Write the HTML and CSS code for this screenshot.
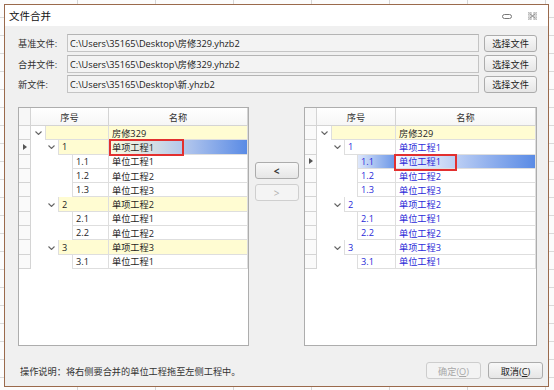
FILE: index.html
```html
<!DOCTYPE html>
<html lang="zh-CN">
<head>
<meta charset="utf-8">
<title>文件合并</title>
<link rel="stylesheet" href="styles.css">
</head>
<body>
<div class="dialog">
  <div class="titlebar">
    <span class="title">文件合并</span>
    <svg class="wmin" width="10" height="5" viewBox="0 0 10 5"><rect x="0.5" y="0.5" width="9" height="4" rx="2" fill="none" stroke="#777" stroke-width="1"/></svg>
    <svg class="wclose" width="9" height="8" viewBox="0 0 9 8"><path d="M1.5 1.5 L7.5 6.5 M7.5 1.5 L1.5 6.5" stroke="#888" stroke-width="1" fill="none"/><rect x="0" y="0" width="3" height="3" fill="none" stroke="#999" stroke-width="0.8"/><rect x="6" y="0" width="3" height="3" fill="none" stroke="#999" stroke-width="0.8"/><rect x="0" y="5" width="3" height="3" fill="none" stroke="#999" stroke-width="0.8"/><rect x="6" y="5" width="3" height="3" fill="none" stroke="#999" stroke-width="0.8"/></svg>
  </div>
  <div class="content">
    <div class="files">
      <span class="lbl">基准文件:</span><div class="input">C:\Users\35165\Desktop\房修329.yhzb2</div><button class="btn">选择文件</button>
      <span class="lbl">合并文件:</span><div class="input">C:\Users\35165\Desktop\房修329.yhzb2</div><button class="btn">选择文件</button>
      <span class="lbl">新文件:</span><div class="input">C:\Users\35165\Desktop\新.yhzb2</div><button class="btn">选择文件</button>
    </div>
    <div class="panels">
      <div class="tree tleft">
        <div class="hrow"><div class="rh"></div><div class="hc1">序号</div><div class="hc2">名称</div></div>
        <div class="row l0 yel"><div class="rh"></div><div class="c1"><span class="ind"><svg class="chev" width="7" height="4" viewBox="0 0 7 4"><polyline points="0.5,0.5 3.5,3.5 6.5,0.5" fill="none" stroke="#666" stroke-width="1.1"/></svg></span><span class="cell"></span></div><div class="c2">房修329</div></div>
        <div class="row l1 yel"><div class="rh"><svg width="4" height="6" viewBox="0 0 4 6"><path d="M0 0 L4 3 L0 6Z" fill="#555"/></svg></div><div class="c1"><span class="ind"><svg class="chev" width="7" height="4" viewBox="0 0 7 4"><polyline points="0.5,0.5 3.5,3.5 6.5,0.5" fill="none" stroke="#666" stroke-width="1.1"/></svg></span><span class="cell">1</span></div><div class="c2 selL">单项工程1<span class="redbox rbL"></span></div></div>
        <div class="row l2"><div class="rh"></div><div class="c1"><span class="ind"></span><span class="cell">1.1</span></div><div class="c2">单位工程1</div></div>
        <div class="row l2"><div class="rh"></div><div class="c1"><span class="ind"></span><span class="cell">1.2</span></div><div class="c2">单位工程2</div></div>
        <div class="row l2"><div class="rh"></div><div class="c1"><span class="ind"></span><span class="cell">1.3</span></div><div class="c2">单位工程3</div></div>
        <div class="row l1 yel"><div class="rh"></div><div class="c1"><span class="ind"><svg class="chev" width="7" height="4" viewBox="0 0 7 4"><polyline points="0.5,0.5 3.5,3.5 6.5,0.5" fill="none" stroke="#666" stroke-width="1.1"/></svg></span><span class="cell">2</span></div><div class="c2">单项工程2</div></div>
        <div class="row l2"><div class="rh"></div><div class="c1"><span class="ind"></span><span class="cell">2.1</span></div><div class="c2">单位工程1</div></div>
        <div class="row l2"><div class="rh"></div><div class="c1"><span class="ind"></span><span class="cell">2.2</span></div><div class="c2">单位工程2</div></div>
        <div class="row l1 yel"><div class="rh"></div><div class="c1"><span class="ind"><svg class="chev" width="7" height="4" viewBox="0 0 7 4"><polyline points="0.5,0.5 3.5,3.5 6.5,0.5" fill="none" stroke="#666" stroke-width="1.1"/></svg></span><span class="cell">3</span></div><div class="c2">单项工程3</div></div>
        <div class="row l2"><div class="rh"></div><div class="c1"><span class="ind"></span><span class="cell">3.1</span></div><div class="c2">单位工程1</div></div>
      </div>
      <div class="mid">
        <button class="mbtn">&lt;</button>
        <button class="mbtn dis">&gt;</button>
      </div>
      <div class="tree tright">
        <div class="hrow"><div class="rh"></div><div class="hc1">序号</div><div class="hc2">名称</div></div>
        <div class="row l0 yel"><div class="rh"></div><div class="c1"><span class="ind"><svg class="chev" width="7" height="4" viewBox="0 0 7 4"><polyline points="0.5,0.5 3.5,3.5 6.5,0.5" fill="none" stroke="#666" stroke-width="1.1"/></svg></span><span class="cell"></span></div><div class="c2">房修329</div></div>
        <div class="row l1 blue"><div class="rh"></div><div class="c1"><span class="ind"><svg class="chev" width="7" height="4" viewBox="0 0 7 4"><polyline points="0.5,0.5 3.5,3.5 6.5,0.5" fill="none" stroke="#666" stroke-width="1.1"/></svg></span><span class="cell">1</span></div><div class="c2">单项工程1</div></div>
        <div class="row l2 blue"><div class="rh"><svg width="4" height="6" viewBox="0 0 4 6"><path d="M0 0 L4 3 L0 6Z" fill="#555"/></svg></div><div class="c1"><span class="ind"></span><span class="cell selR1">1.1</span></div><div class="c2 selR2">单位工程1<span class="redbox rbR"></span></div></div>
        <div class="row l2 blue"><div class="rh"></div><div class="c1"><span class="ind"></span><span class="cell">1.2</span></div><div class="c2">单位工程2</div></div>
        <div class="row l2 blue"><div class="rh"></div><div class="c1"><span class="ind"></span><span class="cell">1.3</span></div><div class="c2">单位工程3</div></div>
        <div class="row l1 blue"><div class="rh"></div><div class="c1"><span class="ind"><svg class="chev" width="7" height="4" viewBox="0 0 7 4"><polyline points="0.5,0.5 3.5,3.5 6.5,0.5" fill="none" stroke="#666" stroke-width="1.1"/></svg></span><span class="cell">2</span></div><div class="c2">单项工程2</div></div>
        <div class="row l2 blue"><div class="rh"></div><div class="c1"><span class="ind"></span><span class="cell">2.1</span></div><div class="c2">单位工程1</div></div>
        <div class="row l2 blue"><div class="rh"></div><div class="c1"><span class="ind"></span><span class="cell">2.2</span></div><div class="c2">单位工程2</div></div>
        <div class="row l1 blue"><div class="rh"></div><div class="c1"><span class="ind"><svg class="chev" width="7" height="4" viewBox="0 0 7 4"><polyline points="0.5,0.5 3.5,3.5 6.5,0.5" fill="none" stroke="#666" stroke-width="1.1"/></svg></span><span class="cell">3</span></div><div class="c2">单项工程3</div></div>
        <div class="row l2 blue"><div class="rh"></div><div class="c1"><span class="ind"></span><span class="cell">3.1</span></div><div class="c2">单位工程1</div></div>
      </div>
    </div>
    <div class="footer">
      <span class="hint">操作说明：将右侧要合并的单位工程拖至左侧工程中。</span>
      <button class="fbtn dis">确定(<u>O</u>)</button>
      <button class="fbtn">取消(<u>C</u>)</button>
    </div>
  </div>
</div>
</body>
</html>
```

FILE: styles.css
```css
* { box-sizing: border-box; }
html, body { margin: 0; padding: 0; }
body {
  width: 554px;
  height: 390px;
  overflow: hidden;
  padding: 4px 0 0 4px;
  font-family: "Open Sans", "Noto Sans CJK SC", "Microsoft YaHei", sans-serif;
  font-size: 9.2px;
  color: #1e1e1e;
  background-color: #fcfcfc;
  background-image:
    repeating-linear-gradient(to bottom, transparent 0 17px, #dadada 17px 18px),
    repeating-linear-gradient(to right, transparent 0 77px, #d6d6d6 77px 78px);
}
.dialog {
  width: 545px;
  height: 383px;
  border: 1px solid #9a6a4c;
  background: #f0f0f0;
  display: flex;
  flex-direction: column;
}
.titlebar {
  flex: none;
  height: 21px;
  background: #fff;
  display: flex;
  align-items: center;
  padding: 0 10px 0 4px;
}
.title { flex: 1; font-size: 10.5px; color: #111; }
.wmin { margin-right: 16px; margin-top: 2px; }
.wclose { margin-right: 1px; }

.content {
  flex: 1;
  display: flex;
  flex-direction: column;
  padding: 8px 11px 0 13px;
}
.files {
  display: grid;
  grid-template-columns: 44px 1fr 53px;
  grid-auto-rows: 18px;
  column-gap: 5px;
  row-gap: 2.5px;
  align-items: center;
}
.lbl { color: #333; white-space: nowrap; }
.input {
  height: 18px;
  border: 1px solid #c4c4c4;
  border-top-color: #b4b4b4;
  background: #f3f3f3;
  padding-left: 2px;
  display: flex;
  align-items: center;
  white-space: nowrap;
  color: #1a1a1a;
}
.btn, .mbtn, .fbtn {
  font: inherit;
  color: #222;
  margin: 0;
  padding: 0;
  border: 1px solid #acacac;
  border-radius: 3px;
  background: linear-gradient(#f8f8f8, #e6e6e6);
}
.btn { height: 17px; }

.panels {
  display: flex;
  margin-top: 14px;
  height: 239px;
}
.tree {
  background: #fff;
  border: 1px solid #adadad;
  display: flex;
  flex-direction: column;
}
.tleft { width: 231px; }
.tright { width: 233px; }
.mid {
  flex: 1;
  display: flex;
  flex-direction: column;
  align-items: center;
  padding-top: 55px;
  gap: 5px;
}
.mbtn {
  width: 44px;
  height: 17px;
  font-weight: bold;
  font-size: 10px;
  color: #333;
}
.mbtn.dis { color: #b0b0b0; font-weight: normal; border-color: #cfcfcf; background: #f4f4f4; }

.hrow, .row { display: flex; flex: none; }
.hrow { height: 18px; }
.row { height: 14.3px; }
.rh {
  width: 12px;
  flex: none;
  border-right: 1px solid #d4d4d4;
  border-bottom: 1px solid #d4d4d4;
  background: #fafafa;
  display: flex;
  align-items: center;
  justify-content: center;
}
.hrow .rh { background: #f7f7f7; }
.hc1, .hc2 {
  display: flex;
  align-items: center;
  justify-content: center;
  border-right: 1px solid #d4d4d4;
  border-bottom: 1px solid #d4d4d4;
  color: #333;
  background: linear-gradient(#ffffff, #f6f6f6);
}
.tleft .hc1, .tleft .c1 { width: 78px; flex: none; }
.tright .hc1, .tright .c1 { width: 79px; flex: none; }
.hc2, .c2 { flex: 1; }

.c1 { display: flex; }
.ind {
  flex: none;
  display: flex;
  align-items: center;
  justify-content: flex-end;
}
.chev { margin-right: 3px; }
.l0 .ind { width: 14px; }
.l1 .ind { width: 27px; }
.tleft .l2 .ind { width: 41px; }
.tright .l2 .ind { width: 40px; }
.cell {
  flex: 1;
  display: flex;
  align-items: center;
  padding-left: 3px;
  border-left: 1px solid #dedede;
  border-right: 1px solid #dedede;
  border-bottom: 1px solid #dedede;
}
.c2 {
  position: relative;
  display: flex;
  align-items: center;
  padding-left: 3px;
  border-right: 1px solid #dedede;
  border-bottom: 1px solid #dedede;
  white-space: nowrap;
}
.yel .cell, .yel .c2 { background: #fffcd2; }
.blue .cell, .blue .c2 { color: #2a2ad8; }

.selL { background: linear-gradient(to right, #fbfbe0 0%, #dfe6e4 25%, #a9c0ec 60%, #5a8be5 100%) !important; }
.selR1 { background: linear-gradient(to right, #dfe8fb 0%, #a2bdf0 50%, #6d98e8 100%); }
.selR2 { background: linear-gradient(to right, #f4f7fe 0%, #d2dff8 30%, #95b3ee 65%, #5a8be5 100%); }

.redbox {
  position: absolute;
  top: -1px;
  height: 17px;
  border: 2px solid #e23030;
}
.rbL { left: 0; width: 75px; }
.rbR { left: -2px; width: 63px; }

.footer {
  display: flex;
  align-items: center;
  margin-top: 16px;
  margin-right: -6px;
  height: 17px;
  gap: 7px;
}
.hint { flex: 1; padding-left: 2px; color: #333; font-size: 9.2px; }
.fbtn { width: 55px; height: 17px; }
.fbtn.dis { color: #a8a8a8; border-color: #cdcdcd; background: #f3f3f3; }
```
